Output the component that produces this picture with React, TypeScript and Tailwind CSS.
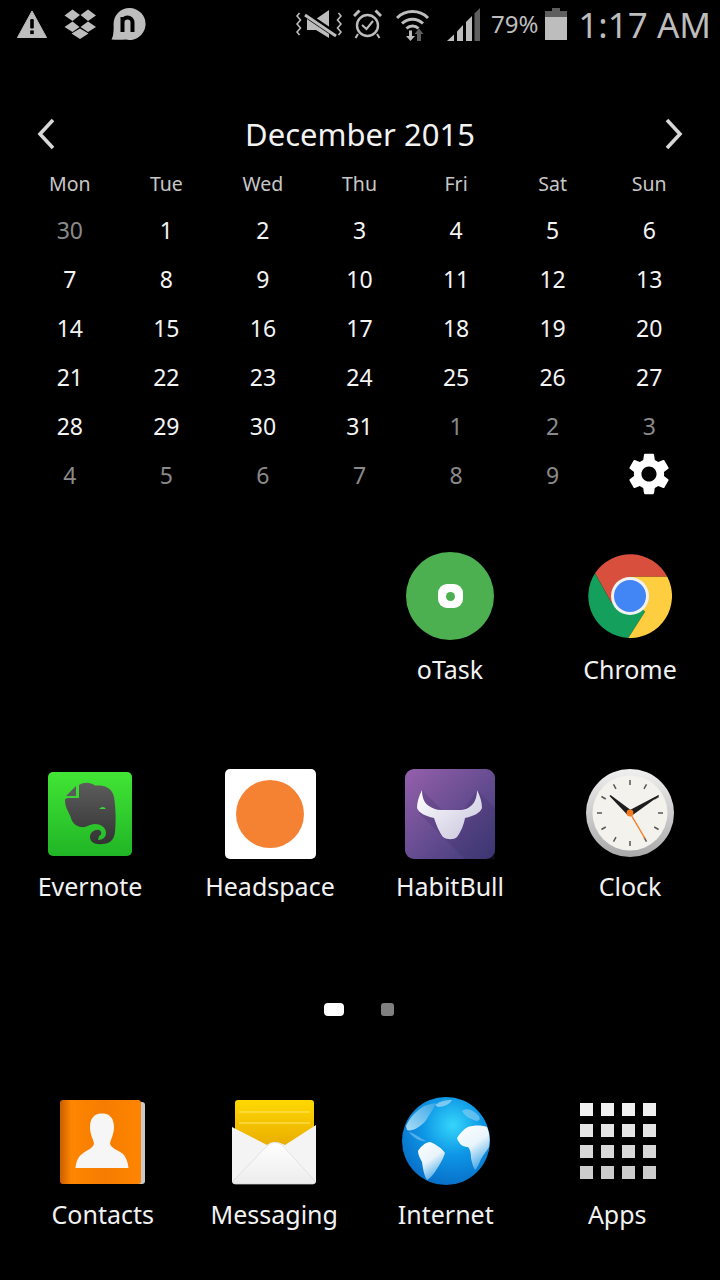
import React from 'react';

const weekDays = ['Mon', 'Tue', 'Wed', 'Thu', 'Fri', 'Sat', 'Sun'];

const days: { v: string; dim?: boolean }[] = [
  { v: '30', dim: true },
  ...Array.from({ length: 31 }, (_, i) => ({ v: String(i + 1) })),
  ...['1', '2', '3', '4', '5', '6', '7', '8', '9'].map((v) => ({ v, dim: true })),
];

const WarningIcon = () => (
  <svg width="30" height="28" viewBox="0 0 30 28">
    <path d="M15 1 L29.5 27.5 H0.5 Z" fill="#bdbdbd" stroke="#bdbdbd" strokeLinejoin="round" />
    <rect x="13.2" y="9" width="3.6" height="9.5" rx="1.2" fill="#000" />
    <rect x="13.2" y="20.5" width="3.6" height="3.6" fill="#000" />
  </svg>
);

const DropboxIcon = () => (
  <svg width="32" height="30" viewBox="0 0 32 30" fill="#bdbdbd">
    <polygon points="8.5,0.5 16,6 8.5,12 0.5,6.5" />
    <polygon points="24,0.5 32,6.5 24,12 16.5,6" />
    <polygon points="8.5,12.5 15.5,18 8.5,23 0.5,18" />
    <polygon points="24,12.5 32,18 24,23 16.5,18" />
    <polygon points="7.5,24.5 16,19.5 24.5,24.5 16,30" />
  </svg>
);

const NIcon = () => (
  <svg width="35" height="32" viewBox="0 0 35 32">
    <path d="M18.5 0 A16 16 0 1 1 15 31.6 Q6 32 0.5 31.5 Q3 27 2.6 17 A16 16 0 0 1 18.5 0 Z" fill="#bdbdbd" />
    <path d="M11.5 24 V9 M11.5 14.5 A5 5 0 0 1 21.5 14.5 V24" fill="none" stroke="#000" strokeWidth="4" />
  </svg>
);

const MuteIcon = () => (
  <svg width="46" height="30" viewBox="0 0 46 30">
    <path d="M3.5 4 L1 7 L4.5 11 L1 15 L4.5 19 L1 23 L3.5 26" fill="none" stroke="#bdbdbd" strokeWidth="1.6" />
    <path d="M42.5 4 L45 7 L41.5 11 L45 15 L41.5 19 L45 23 L42.5 26" fill="none" stroke="#bdbdbd" strokeWidth="1.6" />
    <polygon points="11,10 20,10 33,1 33,29 20,21 11,21" fill="#bdbdbd" />
    <line x1="9" y1="5" x2="40" y2="26" stroke="#000" strokeWidth="6" />
    <line x1="9" y1="6" x2="40" y2="27" stroke="#bdbdbd" strokeWidth="3" />
  </svg>
);

const AlarmIcon = () => (
  <svg width="29" height="30" viewBox="0 0 29 30" fill="none" stroke="#bdbdbd">
    <circle cx="14.5" cy="16.5" r="10.5" strokeWidth="2.4" />
    <path d="M1 7 L6.5 1.5" strokeWidth="3" />
    <path d="M28 7 L22.5 1.5" strokeWidth="3" />
    <path d="M5 25 L2.5 29" strokeWidth="2" />
    <path d="M24 25 L26.5 29" strokeWidth="2" />
    <path d="M9 16 L13.5 20 L20 12" strokeWidth="2" />
  </svg>
);

const WifiIcon = () => (
  <svg width="33" height="33" viewBox="0 0 33 33" fill="none" stroke="#bdbdbd">
    <path d="M1 10 A22 22 0 0 1 32 10" strokeWidth="3" />
    <path d="M6 15.5 A15 15 0 0 1 27 15.5" strokeWidth="3" />
    <path d="M10.5 20.5 A8.5 8.5 0 0 1 22.5 20.5" strokeWidth="3" />
    <polygon points="13,22.5 13,28 10,28 14.5,33 19,28 16,28 16,22.5" fill="#bdbdbd" stroke="none" />
    <polygon points="23,20.5 18.5,26 21,26 21,33 25,33 25,26 27.5,26" fill="#5e5e5e" stroke="none" />
  </svg>
);

const SignalIcon = () => (
  <svg width="34" height="33" viewBox="0 0 34 33">
    <polygon points="0,33 7,26.5 7,33" fill="#bdbdbd" />
    <polygon points="10,23.5 16,17 16,33 10,33" fill="#bdbdbd" />
    <polygon points="19,14 25,8 25,33 19,33" fill="#bdbdbd" />
    <polygon points="27.5,5.5 33,0 33,33 27.5,33" fill="#5e5e5e" />
  </svg>
);

const BatteryIcon = () => (
  <svg width="22" height="32" viewBox="0 0 22 32">
    <rect x="7" y="0" width="8" height="3" fill="#5e5e5e" />
    <rect x="0" y="3" width="22" height="6" fill="#5e5e5e" />
    <rect x="0" y="9" width="22" height="23" fill="#bdbdbd" />
  </svg>
);

const ChromeIcon = () => (
  <svg width="84" height="84" viewBox="0 0 84 84">
    <path d="M7 19.3 A42 42 0 0 1 79.3 22.7 L42 22.7 L42 42 L23.7 49.3 Z" fill="#d94f3d" />
    <path d="M7 19.3 L23.7 49.3 L42 42 L57 57.7 L40.3 84 A42 42 0 0 1 7 19.3 Z" fill="#14a05c" />
    <path d="M79.3 22.7 A42 42 0 0 1 40.3 84 L57 57.7 L42 42 L42 22.7 Z" fill="#ffcd40" />
    <circle cx="42" cy="42" r="19" fill="#f1f1f1" />
    <circle cx="42" cy="42" r="16" fill="#4285f4" />
  </svg>
);

const EvernoteIcon = () => (
  <svg width="84" height="84" viewBox="0 0 84 84">
    <defs>
      <linearGradient id="en" x1="0" y1="0" x2="0" y2="1">
        <stop offset="0" stopColor="#42e535" />
        <stop offset="1" stopColor="#20b526" />
      </linearGradient>
      <linearGradient id="enb" x1="0" y1="0" x2="0" y2="1">
        <stop offset="0" stopColor="#5c5c5c" />
        <stop offset="1" stopColor="#333" />
      </linearGradient>
    </defs>
    <rect width="84" height="84" rx="5" fill="url(#en)" />
    <path
      d="M31 13 C36 10 42 10 47 13.5 C56 13 64 15 66 25 C68 38 68 50 67 60 C66 68 62 72 54 72 C47 73 42 70 42 65 C42 60 47 57 51 58 C54 59 54 63 51 64 L50 68 C55 68 58 65 58 61 C58 55 52 52 47 52 C42 52 38 56 33 55 C27 54 24 50 23 46 C21 40 17 36 17 28 C17 27 18 26 20 26 L31 26 Z"
      fill="url(#enb)"
    />
    <path d="M18 24 L28 14 V24 Z" fill="#5a5a5a" />
    <path d="M51 37 Q55 33 58 37 Z" fill="#3fd63a" />
  </svg>
);

const BullIcon = () => (
  <svg width="90" height="90" viewBox="0 0 90 90">
    <defs>
      <linearGradient id="hb" x1="0" y1="0" x2="1" y2="1">
        <stop offset="0" stopColor="#9560ab" />
        <stop offset="1" stopColor="#3b3a78" />
      </linearGradient>
      <linearGradient id="hbh" x1="0" y1="0" x2="1" y2="1">
        <stop offset="0" stopColor="#ffffff" />
        <stop offset="1" stopColor="#c6c3dc" />
      </linearGradient>
    </defs>
    <rect width="90" height="90" rx="9" fill="url(#hb)" />
    <polygon points="17,21 38,42 58,42 72,21 90,39 90,90 60,90 14,44" fill="#3a2a60" opacity="0.22" />
    <path
      d="M17 21 C14 27 12 33 12 39 C14 44 20 47 29 49 C31 55 34 63 38 68 C42 71 49 71 52 68 C56 63 59 55 60 49 C69 47 75 44 77 39 C77 33 75 27 72 21 C72 28 70 33 67 36 C64 39 60 41 54 41 L36 41 C31 41 27 39 24 37 C19 34 17 28 17 21 Z"
      fill="url(#hbh)"
    />
  </svg>
);

const ClockIcon = () => (
  <svg width="88" height="88" viewBox="0 0 88 88" className="-mt-[1px]">
    <defs>
      <linearGradient id="rim" x1="0" y1="0" x2="0" y2="1">
        <stop offset="0" stopColor="#f0f0f0" />
        <stop offset="1" stopColor="#a9a9a9" />
      </linearGradient>
    </defs>
    <circle cx="44" cy="44" r="44" fill="url(#rim)" />
    <circle cx="44" cy="44" r="37.5" fill="#f3f2ec" />
    {Array.from({ length: 12 }, (_, i) => (
      <line key={i} x1="44" y1="11" x2="44" y2="16" stroke="#555" strokeWidth="1.5" transform={`rotate(${i * 30} 44 44)`} />
    ))}
    <polygon points="23.5,27 24.5,26 46,42 42,46.5" fill="#1d1d1d" />
    <polygon points="72.5,26 73,27 46,46.5 42,42" fill="#1d1d1d" />
    <line x1="44" y1="44" x2="59" y2="69.5" stroke="#f47a20" strokeWidth="1.4" />
    <circle cx="44" cy="44" r="3.4" fill="#f47a20" />
  </svg>
);

const ContactsIcon = () => (
  <svg width="85" height="85" viewBox="0 0 85 85">
    <defs>
      <linearGradient id="ct" x1="0" y1="0" x2="1" y2="0">
        <stop offset="0" stopColor="#c95e00" />
        <stop offset="0.14" stopColor="#ff8600" />
        <stop offset="0.55" stopColor="#f57c00" />
        <stop offset="1" stopColor="#ff8500" />
      </linearGradient>
    </defs>
    <rect x="70" y="2" width="15" height="82" rx="3" fill="#c9c9c9" />
    <rect width="81" height="84" rx="3" fill="url(#ct)" />
    <path
      d="M42 13.5 C50 13 54 19 54 27 C54 34 51 39 50 43 C50 48 58 50 63 54 C66 57 68 62 68.5 68 L15.5 68 C16 62 18 57 22 54 C27 50 34 48 34 43 C33 39 30 34 30 27 C30 19 34 13 42 13.5 Z"
      fill="#f6f6f6"
    />
  </svg>
);

const MessagingIcon = () => (
  <svg width="86" height="86" viewBox="0 0 86 86">
    <defs>
      <linearGradient id="ms" x1="0" y1="0" x2="0" y2="1">
        <stop offset="0" stopColor="#ffd900" />
        <stop offset="1" stopColor="#e29f00" />
      </linearGradient>
      <linearGradient id="ev" x1="0" y1="0" x2="0" y2="1">
        <stop offset="0" stopColor="#ffffff" />
        <stop offset="1" stopColor="#ececec" />
      </linearGradient>
    </defs>
    <rect x="4" y="1" width="79" height="60" rx="3" fill="url(#ms)" />
    <path d="M8 13 H79 M8 24 H79" stroke="#ffe866" strokeWidth="1" />
    <path d="M1 28 L36 46 Q43 40 54 46 L85 26 V82 Q85 85 82 85 H4 Q1 85 1 82 Z" fill="#f4f4f4" />
    <path d="M2 82 L36 47 Q43 40 51 46 L84 82 Q84 85 82 85 H4 Q2 85 2 82 Z" fill="url(#ev)" stroke="#d8d8d8" strokeWidth="0.7" />
  </svg>
);

const GlobeIcon = () => (
  <svg width="88" height="88" viewBox="0 0 88 88">
    <defs>
      <radialGradient id="gl" cx="0.58" cy="0.32" r="0.75">
        <stop offset="0" stopColor="#35d6fb" />
        <stop offset="0.45" stopColor="#0e97e6" />
        <stop offset="1" stopColor="#0769c4" />
      </radialGradient>
      <linearGradient id="ld" x1="0" y1="0" x2="0.5" y2="1">
        <stop offset="0" stopColor="#ffffff" />
        <stop offset="0.55" stopColor="#e8f4fb" />
        <stop offset="1" stopColor="#52aee8" />
      </linearGradient>
      <linearGradient id="na" x1="0" y1="1" x2="1" y2="0">
        <stop offset="0" stopColor="#a8dcf7" />
        <stop offset="1" stopColor="#3ba8e6" />
      </linearGradient>
    </defs>
    <circle cx="44" cy="44" r="44" fill="url(#gl)" />
    <path d="M16 54 C19 49 24 45 28 45 C33 47 40 51 43 56 C41 63 36 70 33 75 C30 79 27 82 25 83 C21 76 21 70 20 65 C18 61 16 58 16 54 Z" fill="url(#ld)" />
    <path d="M55 41 C58 36 62 32 66 30 C72 28 80 28 85 30 C88 37 88 44 87 50 C84 55 81 58 79 62 C77 67 75 71 73 73 C71 70 70 66 69 61 C69 56 68 52 66 50 C62 50 57 48 55 41 Z" fill="url(#ld)" />
    <path d="M4 29 C8 20 14 14 22 9 C28 7 32 6 34 6 C32 11 29 15 26 20 C24 25 18 29 15 31 C12 33 7 34 5 33 Z" fill="url(#na)" />
    <path d="M33 8 C38 4 44 3 50 3 C48 7 42 10 36 10 Z" fill="#9fd6f5" opacity="0.75" />
    <path d="M60 14 C64 11 70 12 76 18 C79 21 78 24 74 24 C70 22 64 21 60 14 Z" fill="#8fd0f3" opacity="0.6" />
    <path d="M7 35 C12 36 18 41 24 44 C20 45 12 42 7 35 Z" fill="#7fc8f0" opacity="0.6" />
  </svg>
);

const AppsIcon = () => {
  const rows = ['bg-[#f0f0f0]', 'bg-[#e4e4e4]', 'bg-[#d8d8d8]', 'bg-[#cccccc]'];
  return (
    <div className="grid grid-cols-4 gap-x-[8px] gap-y-[8px] w-[76px] ml-[1px]">
      {rows.flatMap((c, r) => [0, 1, 2, 3].map((i) => <div key={`${r}-${i}`} className={`h-[13px] w-[13px] ${c}`} />))}
    </div>
  );
};

const OTaskIcon = () => (
  <div className="w-[88px] h-[88px] rounded-full bg-[#4caf50] flex items-center justify-center">
    <div className="w-[25px] h-[24px] rounded-[9px] bg-white flex items-center justify-center">
      <div className="w-[9px] h-[9px] rounded-full bg-[#4caf50]" />
    </div>
  </div>
);

const AppCell = ({ label, children }: { label: string; children: React.ReactNode }) => (
  <div className="flex flex-col items-center">
    <div className="h-[90px] flex items-center justify-center">{children}</div>
    <div className="mt-[10px] h-[36px] leading-[36px] text-[25px] text-[#f2f2f2] whitespace-nowrap">{label}</div>
  </div>
);

const App: React.FC = () => {
  return (
    <div className="w-[720px] h-[1280px] bg-black overflow-hidden font-['Noto_Sans',sans-serif]">
      {/* status bar */}
      <div className="h-[48px] flex items-center">
        <div className="ml-[17px]"><WarningIcon /></div>
        <div className="ml-[17px]"><DropboxIcon /></div>
        <div className="ml-[15px]"><NIcon /></div>
        <div className="ml-auto"><MuteIcon /></div>
        <div className="ml-[11px]"><AlarmIcon /></div>
        <div className="ml-[14px]"><WifiIcon /></div>
        <div className="ml-[18px]"><SignalIcon /></div>
        <span className="ml-[10px] text-[24px] text-[#bdbdbd]">79%</span>
        <div className="ml-[7px]"><BatteryIcon /></div>
        <span className="ml-[11px] mr-[9px] text-[35px] leading-none text-[#bdbdbd]">1:17 AM</span>
      </div>

      {/* calendar */}
      <div className="mt-[62px] h-[48px] flex items-center justify-between px-[37px]">
        <svg width="18" height="32" viewBox="0 0 18 32" fill="none" stroke="#d8d8d8" strokeWidth="3.6">
          <path d="M16 2 L3 16 L16 30" />
        </svg>
        <span className="text-[31px] text-[#f2f2f2]">December 2015</span>
        <svg width="18" height="32" viewBox="0 0 18 32" fill="none" stroke="#d8d8d8" strokeWidth="3.6">
          <path d="M2 2 L15 16 L2 30" />
        </svg>
      </div>
      <div className="pl-[21.5px] pr-[22.5px]">
        <div className="grid grid-cols-7 h-[48px] pt-[4px] items-center text-center text-[19.5px] text-[#c8c8c8]">
          {weekDays.map((d) => <span key={d}>{d}</span>)}
        </div>
        <div className="grid grid-cols-7 auto-rows-[49px] items-center text-center text-[23px]">
          {days.map((d, i) => (
            <span key={i} className={d.dim ? 'text-[#8a8a8a]' : 'text-[#f4f4f4]'}>{d.v}</span>
          ))}
          <div className="flex justify-center -mt-[3px]">
            <svg width="40" height="42" viewBox="2.5 2 19 20" fill="#fff">
              <path d="M19.14 12.94c.04-.3.06-.61.06-.94 0-.32-.02-.64-.07-.94l2.03-1.58c.18-.14.23-.41.12-.61l-1.92-3.32c-.12-.22-.37-.29-.59-.22l-2.39.96c-.5-.38-1.03-.7-1.62-.94l-.36-2.54c-.04-.24-.24-.41-.48-.41h-3.84c-.24 0-.43.17-.47.41l-.36 2.54c-.59.24-1.13.57-1.62.94l-2.39-.96c-.22-.08-.47 0-.59.22L2.74 8.87c-.12.21-.08.47.12.61l2.03 1.58c-.05.3-.09.63-.09.94s.02.64.07.94l-2.03 1.58c-.18.14-.23.41-.12.61l1.92 3.32c.12.22.37.29.59.22l2.39-.96c.5.38 1.03.7 1.62.94l.36 2.54c.05.24.24.41.48.41h3.84c.24 0 .44-.17.47-.41l.36-2.54c.59-.24 1.13-.56 1.62-.94l2.39.96c.22.08.47 0 .59-.22l1.92-3.32c.12-.22.07-.47-.12-.61l-2.01-1.58zM12 15.6c-1.98 0-3.6-1.62-3.6-3.6s1.62-3.6 3.6-3.6 3.6 1.62 3.6 3.6-1.62 3.6-3.6 3.6z" />
            </svg>
          </div>
        </div>
      </div>

      {/* home screen icons */}
      <div className="mt-[51px] grid grid-cols-4 gap-y-[81px]">
        <div className="col-start-3"><AppCell label="oTask"><OTaskIcon /></AppCell></div>
        <AppCell label="Chrome"><ChromeIcon /></AppCell>
        <AppCell label="Evernote"><div className="mt-[2px]"><EvernoteIcon /></div></AppCell>
        <AppCell label="Headspace">
          <div className="mt-[2px] w-[91px] h-[90px] rounded-[5px] bg-white flex items-center justify-center">
            <div className="w-[68px] h-[68px] rounded-full bg-[#f58233]" />
          </div>
        </AppCell>
        <AppCell label="HabitBull"><div className="mt-[2px]"><BullIcon /></div></AppCell>
        <AppCell label="Clock"><ClockIcon /></AppCell>
      </div>

      {/* page dots */}
      <div className="mt-[99px] pr-[2px] flex justify-center items-center gap-[37px] h-[13px]">
        <div className="w-[20px] h-[13px] rounded-[4px] bg-white" />
        <div className="w-[13px] h-[13px] rounded-[3px] bg-[#808080]" />
      </div>

      {/* dock */}
      <div className="mt-[80px] px-[17px] grid grid-cols-4">
        <AppCell label="Contacts"><div className="mt-[2px]"><ContactsIcon /></div></AppCell>
        <AppCell label="Messaging"><div className="mt-[2px]"><MessagingIcon /></div></AppCell>
        <AppCell label="Internet"><GlobeIcon /></AppCell>
        <AppCell label="Apps"><AppsIcon /></AppCell>
      </div>
    </div>
  );
};

export default App;
